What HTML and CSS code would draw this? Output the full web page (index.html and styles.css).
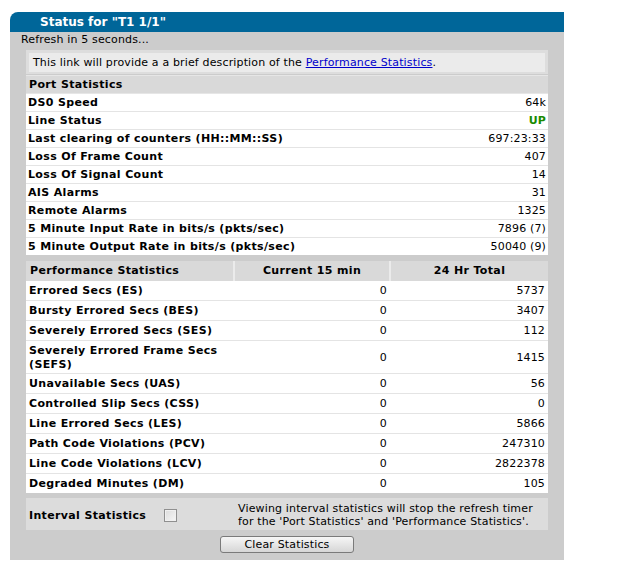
FILE: index.html
```html
<!DOCTYPE html>
<html>
<head>
<meta charset="utf-8">
<link rel="stylesheet" href="styles.css">
</head>
<body>
<div class="panel">
  <div class="title">Status for "T1 1/1"</div>
  <div class="body">
    <div class="refresh">Refresh in 5 seconds...</div>
    <div class="content">
      <div class="intro"><div class="intro-text">This link will provide a a brief description of the <a href="#">Performance Statistics</a>.</div></div>

      <table class="port">
        <tr class="head"><th colspan="2">Port Statistics</th></tr>
        <tr><th>DS0 Speed</th><td>64k</td></tr>
        <tr><th>Line Status</th><td class="up">UP</td></tr>
        <tr><th>Last clearing of counters (HH::MM::SS)</th><td>697:23:33</td></tr>
        <tr><th>Loss Of Frame Count</th><td>407</td></tr>
        <tr><th>Loss Of Signal Count</th><td>14</td></tr>
        <tr><th>AIS Alarms</th><td>31</td></tr>
        <tr><th>Remote Alarms</th><td>1325</td></tr>
        <tr><th>5 Minute Input Rate in bits/s (pkts/sec)</th><td>7896 (7)</td></tr>
        <tr><th>5 Minute Output Rate in bits/s (pkts/sec)</th><td>50040 (9)</td></tr>
      </table>

      <table class="perf">
        <colgroup><col class="c1"><col class="c2"><col class="c3"></colgroup>
        <tr class="head"><th class="first">Performance Statistics</th><th>Current 15 min</th><th>24 Hr Total</th></tr>
        <tr><th>Errored Secs (ES)</th><td class="v2">0</td><td class="v3">5737</td></tr>
        <tr><th>Bursty Errored Secs (BES)</th><td class="v2">0</td><td class="v3">3407</td></tr>
        <tr><th>Severely Errored Secs (SES)</th><td class="v2">0</td><td class="v3">112</td></tr>
        <tr class="tall"><th>Severely Errored Frame Secs (SEFS)</th><td class="v2">0</td><td class="v3">1415</td></tr>
        <tr><th>Unavailable Secs (UAS)</th><td class="v2">0</td><td class="v3">56</td></tr>
        <tr><th>Controlled Slip Secs (CSS)</th><td class="v2">0</td><td class="v3">0</td></tr>
        <tr><th>Line Errored Secs (LES)</th><td class="v2">0</td><td class="v3">5866</td></tr>
        <tr><th>Path Code Violations (PCV)</th><td class="v2">0</td><td class="v3">247310</td></tr>
        <tr><th>Line Code Violations (LCV)</th><td class="v2">0</td><td class="v3">2822378</td></tr>
        <tr><th>Degraded Minutes (DM)</th><td class="v2">0</td><td class="v3">105</td></tr>
      </table>

      <div class="interval">
        <span class="interval-label">Interval Statistics</span>
        <span class="checkbox"></span>
        <span class="interval-note">Viewing interval statistics will stop the refresh timer<br>for the 'Port Statistics' and 'Performance Statistics'.</span>
      </div>
    </div>
    <div class="actions"><button class="btn">Clear Statistics</button></div>
  </div>
</div>
</body>
</html>
```

FILE: styles.css
```css
html, body {
  margin: 0;
  padding: 0;
  background: #ffffff;
}
body {
  font-family: "DejaVu Sans", Verdana, sans-serif;
  font-size: 11px;
  letter-spacing: 0.15px;
  color: #000;
}
.panel {
  width: 554px;
  margin: 12px 0 0 10px;
}
.title {
  height: 20px;
  line-height: 20px;
  background: #006699;
  border-top-left-radius: 8px;
  color: #fff;
  font-weight: bold;
  font-size: 12px;
  letter-spacing: 0;
  padding-left: 30px;
}
.body {
  background: #cccccc;
  padding: 0 0 7px 0;
}
.refresh {
  padding-left: 11px;
  height: 16px;
  line-height: 15px;
}
.content {
  margin: 2px 16px 0 16px;
}
.intro {
  background: #dddddd;
  padding: 3px 3px 2px 3px;
}
.intro-text {
  background: #ebebeb;
  height: 19px;
  line-height: 20px;
  padding-left: 4px;
}
.intro-text a {
  color: #0000cc;
}
table {
  border-collapse: separate;
  border-spacing: 0;
  width: 100%;
  background: #fff;
}
th, td {
  padding: 0;
  font-size: 11px;
}
th {
  letter-spacing: 0.35px;
}
.port {
  margin-top: 1px;
}
.port th {
  text-align: left;
  padding-left: 2px;
  font-weight: bold;
}
.port td {
  text-align: right;
  padding-right: 2px;
}
.port tr th, .port tr td {
  height: 17px;
  border-bottom: 1px solid #e4e4e4;
}
.port tr:last-child th, .port tr:last-child td {
  border-bottom: none;
}
.port .head th {
  background: #d9d9d9;
  border-top: 1px solid #e6e6e6;
  border-bottom: 1px solid #e6e6e6;
  height: 17px;
  padding-left: 3px;
}
.up {
  color: #1a8a00;
  font-weight: bold;
}
.perf {
  table-layout: fixed;
  margin-top: 6px;
}
.c1 { width: 207px; }
.c2 { width: 156px; }
.c3 { width: 159px; }
.perf th, .perf td {
  height: 19px;
  border-bottom: 1px solid #e4e4e4;
}
.perf tr:last-child th, .perf tr:last-child td {
  border-bottom: none;
}
.perf th {
  text-align: left;
  padding-left: 3px;
  font-weight: bold;
  line-height: 14px;
}
.perf .tall th, .perf .tall td {
  height: 32px;
}
.perf .tall th {
  padding-top: 1px;
  height: 31px;
}
.perf .head th {
  background: #d9d9d9;
  height: 20px;
  text-align: center;
  padding-left: 0;
  border-bottom: none;
  border-left: 2px solid #ebebeb;
}
.perf .head th.first {
  text-align: left;
  padding-left: 4px;
  border-left: none;
}
.v2 {
  text-align: right;
  padding-right: 2px;
}
.v3 {
  text-align: right;
  padding-right: 3px;
}
.interval {
  margin-top: 5px;
  background: #dcdcdc;
  height: 32px;
  box-sizing: border-box;
  padding-top: 2px;
  display: flex;
  align-items: center;
}
.interval-label {
  font-weight: bold;
  letter-spacing: 0.35px;
  padding-left: 3px;
  width: 135px;
}
.checkbox {
  width: 11px;
  height: 11px;
  border: 1px solid #8f8f8f;
  background: linear-gradient(135deg, #dcdcdc, #f6f6f6);
  box-shadow: inset 0 0 0 1px #f0f0f0;
}
.interval-note {
  margin-left: 61px;
  line-height: 13px;
}
.actions {
  display: flex;
  justify-content: center;
  padding-top: 6px;
}
.btn {
  width: 134px;
  height: 17px;
  padding: 0;
  font-family: "DejaVu Sans", Verdana, sans-serif;
  font-size: 11px;
  letter-spacing: 0.15px;
  color: #000;
  border: 1px solid #7a7a7a;
  border-radius: 3px;
  background: linear-gradient(#f6f6f6, #e6e6e6 50%, #d6d6d6);
  line-height: 14px;
}
```
